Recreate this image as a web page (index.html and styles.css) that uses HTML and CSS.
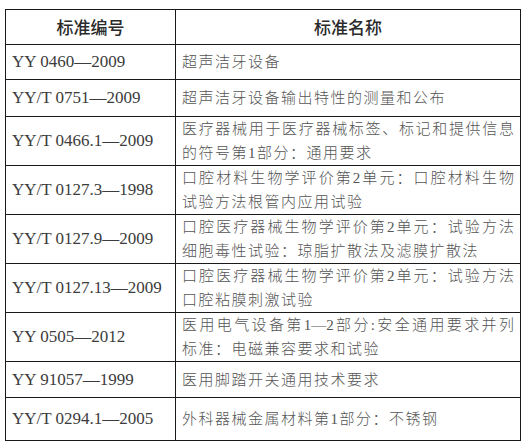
FILE: index.html
```html
<!DOCTYPE html>
<html lang="zh">
<head>
<meta charset="utf-8">
<link rel="stylesheet" href="styles.css">
</head>
<body>
<table class="std">
  <colgroup><col class="c1"><col class="c2"></colgroup>
  <tr class="r35"><th>标准编号</th><th>标准名称</th></tr>
  <tr class="r35"><td class="code">YY 0460—2009</td><td class="name">超声洁牙设备</td></tr>
  <tr class="r37"><td class="code">YY/T 0751—2009</td><td class="name">超声洁牙设备输出特性的测量和公布</td></tr>
  <tr class="r49"><td class="code">YY/T 0466.1—2009</td><td class="name"><span class="ln full">医疗器械用于医疗器械标签、标记和提供信息</span><span class="ln">的符号第1部分：通用要求</span></td></tr>
  <tr class="r49"><td class="code">YY/T 0127.3—1998</td><td class="name"><span class="ln full">口腔材料生物学评价第2单元：口腔材料生物</span><span class="ln">试验方法根管内应用试验</span></td></tr>
  <tr class="r49"><td class="code">YY/T 0127.9—2009</td><td class="name"><span class="ln full">口腔医疗器械生物学评价第2单元：试验方法</span><span class="ln">细胞毒性试验：琼脂扩散法及滤膜扩散法</span></td></tr>
  <tr class="r49"><td class="code">YY/T 0127.13—2009</td><td class="name"><span class="ln full">口腔医疗器械生物学评价第2单元：试验方法</span><span class="ln">口腔粘膜刺激试验</span></td></tr>
  <tr class="r49"><td class="code">YY 0505—2012</td><td class="name"><span class="ln full">医用电气设备第1—2部分:安全通用要求并列</span><span class="ln">标准：电磁兼容要求和试验</span></td></tr>
  <tr class="r36"><td class="code">YY 91057—1999</td><td class="name">医用脚踏开关通用技术要求</td></tr>
  <tr class="r43"><td class="code">YY/T 0294.1—2005</td><td class="name">外科器械金属材料第1部分：不锈钢</td></tr>
</table>
</body>
</html>
```

FILE: styles.css
```css
html, body {
  background: #ffffff;
}
body {
  margin: 9px 0 0 5px;
}
.std {
  border-collapse: collapse;
  table-layout: fixed;
  width: 515px;
}
.c1 { width: 170px; }
.c2 { width: 345px; }
.std th, .std td {
  border: 1px solid #1a1a1a;
  padding: 0 6px;
  vertical-align: middle;
}
.std th {
  font-family: "Noto Sans CJK SC", sans-serif;
  font-weight: 500;
  font-size: 17px;
  color: #2a2a2a;
  text-align: center;
  line-height: 24px;
}
.code {
  font-family: "Liberation Serif", serif;
  font-weight: 400;
  font-size: 17px;
  color: #3c3c3c;
  line-height: 24px;
  white-space: nowrap;
}
.name {
  font-family: "Liberation Serif", "Noto Sans CJK SC", serif;
  font-weight: 300;
  font-size: 15px;
  letter-spacing: 1.5px;
  color: #555;
  line-height: 24px;
  white-space: nowrap;
}
.ln { display: block; }
.full {
  text-align: justify;
  text-align-last: justify;
  letter-spacing: 0;
}
.r35 { height: 35px; }
.r36 { height: 36px; }
.r37 { height: 37px; }
.r43 { height: 43px; }
.r49 { height: 49px; }
```
